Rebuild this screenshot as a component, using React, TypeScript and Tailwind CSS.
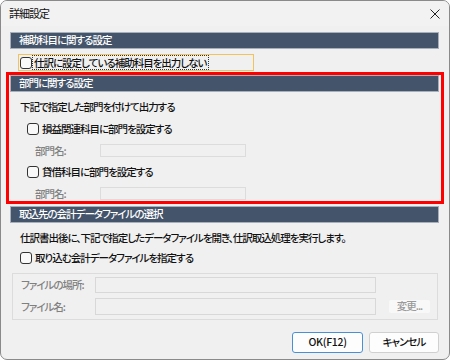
import React from 'react';

const font = "font-['Noto_Sans_CJK_JP','Noto_Sans',sans-serif] [font-feature-settings:'palt']";

function Box() {
  return <span className="w-[12px] h-[12px] rounded-[3px] border border-[#333] bg-[#f9f9f9] shrink-0" />;
}

function Bar({ title, className = '' }: { title: string; className?: string }) {
  return (
    <div
      className={`h-[17px] flex items-center pl-[8px] bg-[#44546a] border border-[#a7b0ba] text-white leading-none ${className}`}
    >
      {title}
    </div>
  );
}

export default function App() {
  return (
    <div className={`w-[450px] h-[361px] bg-white ${font} text-[10.5px] font-medium tracking-[-1px] text-[#111] whitespace-nowrap`}>
      <div className="w-[450px] h-[360px] border border-[#8a8a8a] rounded-[7px] bg-[#f0f0f0] overflow-hidden flex flex-col">
        {/* title bar */}
        <div className="h-[25px] flex items-center justify-between pl-[8px] pr-[8px] bg-[#f2f2f2]">
          <span className="leading-none text-[11px] font-normal">詳細設定</span>
          <svg width="10" height="10" viewBox="0 0 10 10" className="mr-[1px]">
            <path d="M0.5 0.5L9.5 9.5M9.5 0.5L0.5 9.5" stroke="#222" strokeWidth="1" />
          </svg>
        </div>

        <div className="flex flex-col pl-[9px] pr-[10px] pt-[6px]">
          <Bar title="補助科目に関する設定" />

          <div className="mt-[5px] ml-[8px] w-[236px] h-[17px] border border-[#f2c25c] flex items-center pl-[1px]">
            <Box />
            <span className="border border-dotted border-[#333] leading-[13px] pl-[1px] pr-[2px]">
              仕訳に設定している補助科目を出力しない
            </span>
          </div>

          <div className="mt-[1px] -ml-[4px] -mr-[5px] border-[3px] border-[#ff0000] flex flex-col pl-[1px] pr-[2px]">
            <Bar title="部門に関する設定" className="h-[16px]" />
            <div className="h-[22px] mt-[4px] flex items-center pl-[10px]">下記で指定した部門を付けて出力する</div>
            <div className="h-[22px] flex items-center gap-[3px] pl-[17px]">
              <Box />
              <span>損益関連科目に部門を設定する</span>
            </div>
            <div className="h-[21px] flex items-center pl-[25px]">
              <span className="w-[65px] text-[#808080]">部門名:</span>
              <span className="w-[146px] h-[13px] border border-[#dcdcdc] bg-[#f0f0f0]" />
            </div>
            <div className="h-[21px] flex items-center gap-[3px] pl-[17px]">
              <Box />
              <span>貸借科目に部門を設定する</span>
            </div>
            <div className="h-[19px] flex items-end pb-[1px] pl-[25px]">
              <span className="w-[65px] text-[#808080] leading-[13px]">部門名:</span>
              <span className="w-[146px] h-[13px] border border-[#dcdcdc] bg-[#f0f0f0]" />
            </div>
          </div>

          <Bar title="取込先の会計データファイルの選択" className="mt-[2px]" />
          <div className="h-[20px] mt-[5px] flex items-center pl-[10px]">
            仕訳書出後に、下記で指定したデータファイルを開き、仕訳取込処理を実行します。
          </div>
          <div className="h-[20px] flex items-center gap-[3px] pl-[10px]">
            <Box />
            <span>取り込む会計データファイルを指定する</span>
          </div>

          <div className="mt-[5px] ml-[2px] mr-[1px] border border-[#dcdcdc] flex flex-col pt-[3px] pb-[4px] pl-[8px] pr-[7px]">
            <div className="h-[16px] flex items-center">
              <span className="w-[74px] text-[#808080]">ファイルの場所:</span>
              <span className="w-[281px] h-[16px] border border-[#d8d8d8] bg-[#f0f0f0]" />
            </div>
            <div className="h-[17px] mt-[5px] flex items-center">
              <span className="w-[74px] text-[#808080]">ファイル名:</span>
              <span className="w-[281px] h-[17px] border border-[#d8d8d8] bg-[#f0f0f0]" />
              <span className="ml-[13px] w-[41px] h-[13px] bg-[#f8f8f8] rounded-[2px] flex items-center justify-center text-[#9a9a9a] leading-none">
                変更...
              </span>
            </div>
          </div>

          <div className="mt-[12px] flex justify-end gap-[6px]">
            <button className="w-[71px] h-[21px] rounded-[3px] border border-[#4a8fd6] bg-[#fdfdfd] flex items-center justify-center leading-none tracking-[-0.3px]">
              OK(F12)
            </button>
            <button className="w-[70px] h-[21px] rounded-[3px] border border-[#d0d0d0] bg-[#fdfdfd] flex items-center justify-center leading-none">
              キャンセル
            </button>
          </div>
        </div>
      </div>
    </div>
  );
}
